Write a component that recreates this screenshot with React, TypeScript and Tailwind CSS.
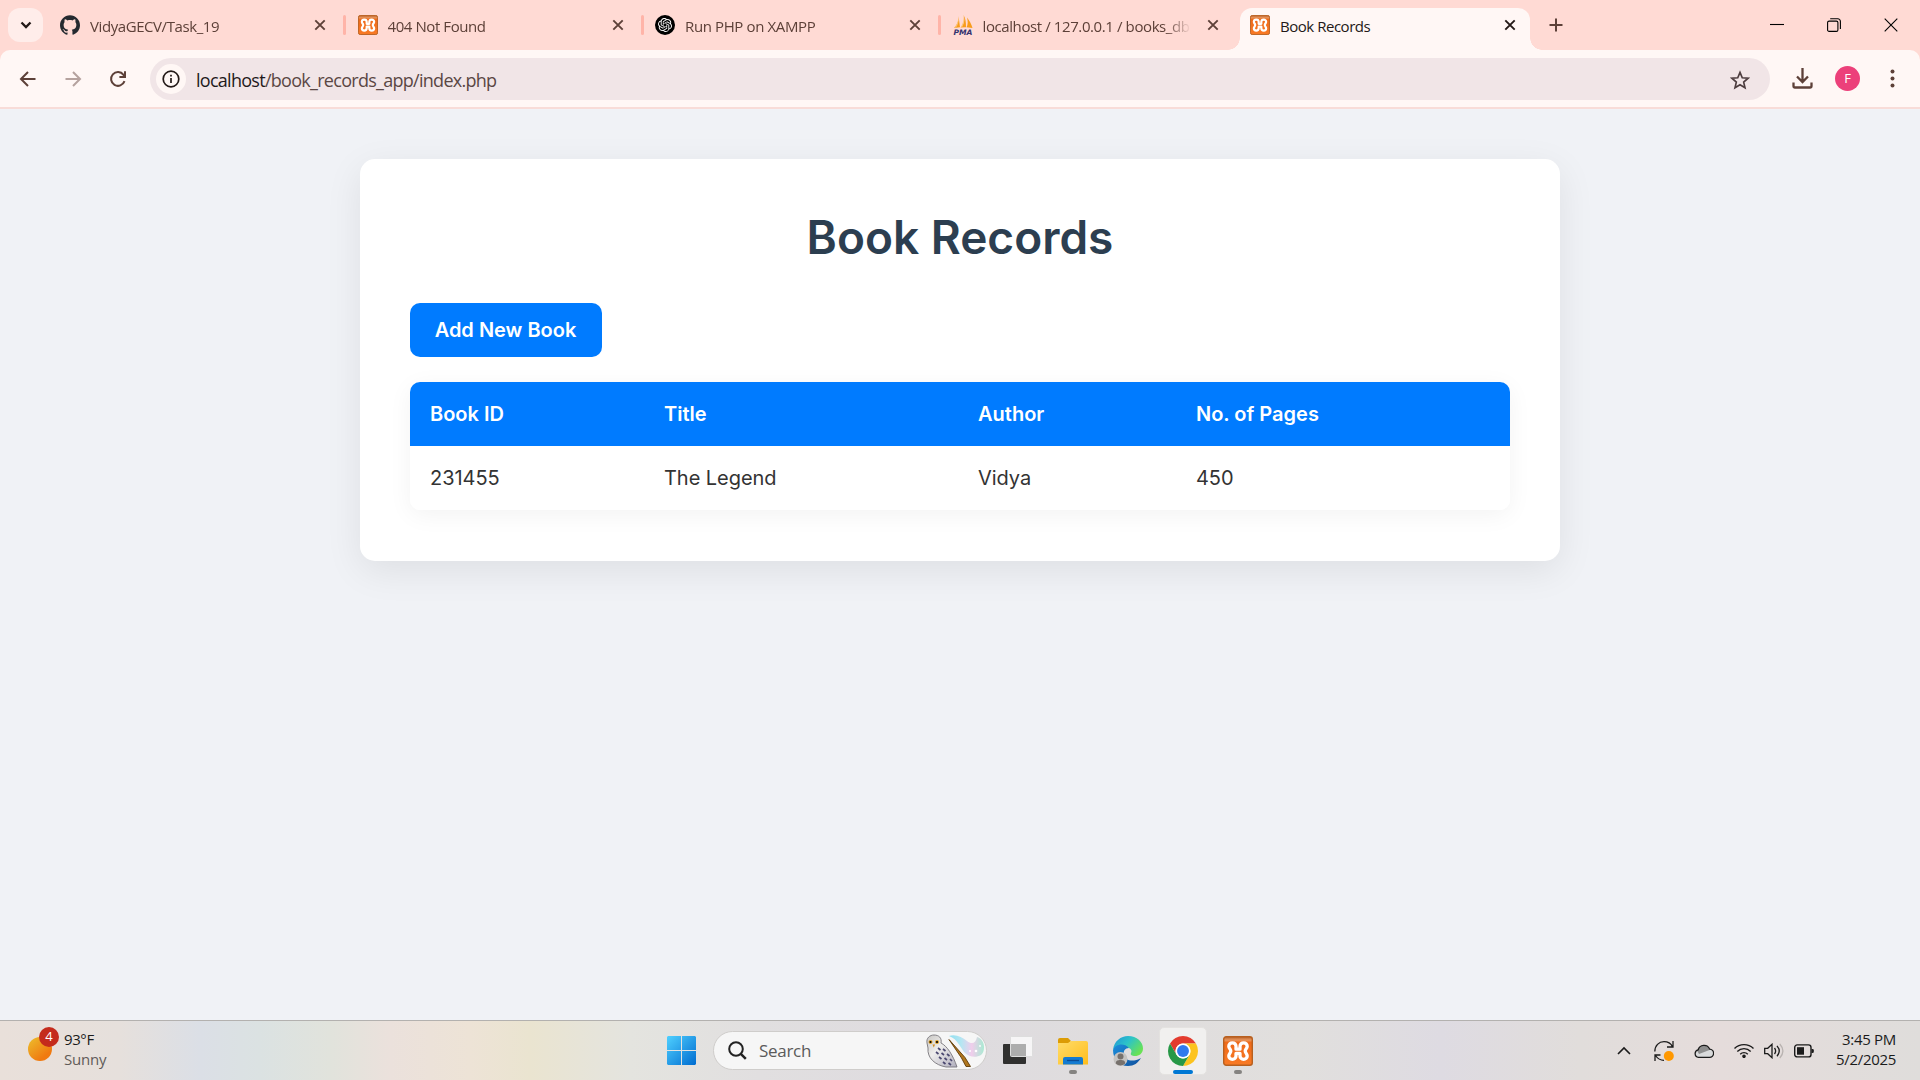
import React from "react";
import { SiOpenai, SiGithub } from "react-icons/si";

const UI = "font-['Open_Sans','Noto_Sans',sans-serif]";

function Xampp({ size }: { size: number }) {
  return (
    <svg width={size} height={size} viewBox="0 0 30 30" className="shrink-0">
      <defs>
        <linearGradient id="xo" x1="0" y1="0" x2="0" y2="1">
          <stop offset="0" stopColor="#b9602a" />
          <stop offset=".12" stopColor="#e8965c" />
          <stop offset=".2" stopColor="#ee6a1a" />
          <stop offset="1" stopColor="#f97a25" />
        </linearGradient>
      </defs>
      <rect x=".7" y=".7" width="28.6" height="28.6" rx="2.5" fill="url(#xo)" stroke="#b8601f" strokeWidth="1.4" />
      <path
        d="M13 13.200V10.200a3.600 3.400 0 0 0-7.200 0c0 2.200 2 2.800 2 4.800s-2 2.800-2 5a3.600 3.400 0 0 0 7.200 0v-2.600h4v2.600a3.600 3.400 0 0 0 7.200 0c0-2.200-2-3-2-5s2-2.600 2-4.800a3.600 3.400 0 0 0-7.200 0v3z"
        fill="none"
        stroke="#fff"
        strokeWidth="3.300"
        strokeLinejoin="round"
      />
    </svg>
  );
}

function Pma() {
  return (
    <svg width="20" height="20" viewBox="0 0 20 20" className="shrink-0">
      <path d="M5.500 1C6 5 5 9 1 13l6-.8zM10.500 0c1.500 5 1 9-3 12.500l5.500-.2C13 7 12.500 3 10.500 0zM14 2.500c1 4 1 7-.5 9.800l6 .7C18.500 9 16.500 6 14 2.500z" fill="#f89c1c" />
      <path d="M5.500 1C5.500 5 4 10 1 13l2-.4C5.500 9 6 6 5.500 1zM10.500 0c.5 5-.5 9-3 12.500l1.500-.1C11.500 8 11.500 4 10.500 0z" fill="#fbc476" />
      <text x="10" y="19.500" textAnchor="middle" fontSize="7.500" fontWeight="bold" fontStyle="italic" fontFamily="DejaVu Sans" fill="#34336f" textLength="19" lengthAdjust="spacingAndGlyphs">PMA</text>
    </svg>
  );
}

function Close({ color }: { color: string }) {
  return (
    <svg width="12" height="12" viewBox="0 0 12 12" className="shrink-0">
      <path d="M1.300 1.300l9.400 9.400M10.700 1.300l-9.400 9.400" stroke={color} strokeWidth="1.900" />
    </svg>
  );
}

function Tab({ icon, title, track, active = false, separator = true }: { icon: React.ReactNode; title: string; track: string; active?: boolean; separator?: boolean }) {
  return (
    <div className={active ? "relative flex h-[42px] w-[290px] items-center rounded-t-[12px] bg-[#fff7f5] pb-2 pl-2.5" : "relative flex h-[42px] w-[297.5px] items-center pb-2 pl-2.5"}>
      {icon}
      <div className={`ml-2.5 w-[208px] overflow-hidden whitespace-nowrap pt-px text-[15px] leading-5 ${track} ${active ? "text-[#231917]" : "text-[#5d4038] [mask-image:linear-gradient(90deg,#000_88%,transparent)]"}`}>
        {title}
      </div>
      <div className="ml-4 flex"><Close color={active ? "#231917" : "#5d4038"} /></div>
      {!active && separator && <div className="absolute left-[293px] top-[7px] h-5 w-[3px] rounded-full bg-[#ffb4a8]" />}
      {active && (
        <>
          <div className="absolute -left-3 bottom-0 size-3 bg-[radial-gradient(circle_at_0_0,transparent_11.5px,#fff7f5_12px)]" />
          <div className="absolute -right-3 bottom-0 size-3 bg-[radial-gradient(circle_at_100%_0,transparent_11.5px,#fff7f5_12px)]" />
        </>
      )}
    </div>
  );
}

function TabStrip() {
  return (
    <div className="flex h-[50px] items-end bg-[#ffdad4]">
      <div className="mb-2 ml-2 mr-[7px] flex h-[34px] w-[35px] items-center justify-center rounded-[12px] bg-[#ffedea]">
        <svg width="12" height="8" viewBox="0 0 12 8"><path d="M1.500 1.500L6 6l4.500-4.500" fill="none" stroke="#231917" strokeWidth="2.300" /></svg>
      </div>
      <Tab icon={<SiGithub size={20} color="#24292f" />} title="VidyaGECV/Task_19" track="tracking-[-0.42px]" />
      <Tab icon={<Xampp size={20} />} title="404 Not Found" track="tracking-[-0.42px]" />
      <Tab
        icon={<span className="flex size-5 shrink-0 items-center justify-center rounded-full bg-black"><SiOpenai size={14} color="#fff" /></span>}
        title="Run PHP on XAMPP"
        track="tracking-[-0.38px]"
      />
      <Tab separator={false} icon={<Pma />} title="localhost / 127.0.0.1 / books_db" track="tracking-[-0.4px]" />
      <Tab active icon={<Xampp size={20} />} title="Book Records" track="tracking-[-0.47px]" />
      <div className="mb-[18px] ml-[19px] flex">
        <svg width="14" height="14" viewBox="0 0 14 14"><path d="M7 .5v13M.5 7h13" stroke="#5d4038" strokeWidth="2" /></svg>
      </div>
      <div className="mb-[18px] ml-auto mr-[22px] flex items-center gap-[43px]">
        <svg width="14" height="14" viewBox="0 0 14 14"><path d="M0 6.500h14" stroke="#000" strokeWidth="1.100" /></svg>
        <svg width="14" height="14" viewBox="0 0 14 14" fill="none" stroke="#000" strokeWidth="1.100"><rect x=".6" y="3.100" width="10.300" height="10.300" rx="1.500" /><path d="M3.200.8h7.600a2.600 2.600 0 0 1 2.600 2.600v7.600" /></svg>
        <svg width="14" height="14" viewBox="0 0 14 14"><path d="M.7.7l12.600 12.600M13.300.7L.7 13.300" stroke="#000" strokeWidth="1.100" /></svg>
      </div>
    </div>
  );
}

function Toolbar() {
  return (
    <div className="bg-[#ffdad4]">
      <div className="flex h-[57px] items-center rounded-t-[10px] bg-[#fff7f5]">
        <div className="ml-[18px] flex w-[132px] items-center gap-[25px]">
          <svg width="20" height="20" viewBox="0 0 20 20" fill="none" stroke="#5d4038" strokeWidth="2"><path d="M17.500 10H3.500M10 3l-7 7 7 7" /></svg>
          <svg width="20" height="20" viewBox="0 0 20 20" fill="none" stroke="#b5a29e" strokeWidth="2"><path d="M2.500 10h14M10 3l7 7-7 7" /></svg>
          <svg width="20" height="20" viewBox="0 0 20 20" fill="none" stroke="#5d4038" strokeWidth="2"><path d="M16.500 12.200A6.900 6.900 0 1 1 15.500 5.800L17 7.500" /><path d="M17 2.300v5.600h-5.600" /></svg>
        </div>
        <div className="flex h-[42px] w-[1620px] items-center rounded-full bg-[#f1e5e7] pl-[6px]">
          <div className="flex size-[30px] items-center justify-center rounded-full bg-[#fff7f5]">
            <svg width="18" height="18" viewBox="0 0 18 18" fill="none" stroke="#231917" strokeWidth="1.700"><circle cx="9" cy="9" r="7.800" /><path d="M9 8v5M9 4.800v1.800" /></svg>
          </div>
          <div className="ml-[10px] pt-[2px] text-[18px] leading-6 tracking-[-0.72px] text-[#5a4744]"><span className="text-[#1f1a1b]">localhost</span>/book_records_app/index.php</div>
          <svg className="ml-auto mr-5 mt-0.5" width="20" height="20" viewBox="0 0 24 24"><path d="M12 2.800l2.700 6.500 7 .6-5.300 4.600 1.600 6.900-6-3.700-6 3.700 1.600-6.900L2.300 9.900l7-.6z" fill="none" stroke="#4d3d3f" strokeWidth="2" /></svg>
        </div>
        <svg className="ml-[22px]" width="21" height="21" viewBox="0 0 21 21" fill="none" stroke="#5d4038" strokeWidth="2.300"><path d="M10.500 0v13.500M5 8.500l5.500 5.500L16 8.500M1.500 14.500V18a1.500 1.500 0 0 0 1.500 1.500h15a1.500 1.500 0 0 0 1.500-1.500v-3.500" /></svg>
        <div className="ml-[22px] flex size-[25px] items-center justify-center rounded-full bg-[#ec407a] text-[13px] text-white">F</div>
        <svg className="ml-[30px]" width="5" height="20" viewBox="0 0 5 20" fill="#5d4038"><circle cx="2.500" cy="2.500" r="2" /><circle cx="2.500" cy="9.500" r="2" /><circle cx="2.500" cy="16.500" r="2" /></svg>
      </div>
      <div className="h-[2px] bg-[#f8dcd8]" />
    </div>
  );
}

function Records() {
  return (
    <main className="flex-1 bg-[#f0f2f6] pt-[50px] font-['Inter',sans-serif]">
      <div className="mx-auto h-[402px] w-[1200px] rounded-[15px] bg-white px-[50px] pt-[50px] shadow-[0_10px_37px_rgba(0,0,0,0.08)]">
        <h1 className="-mt-px text-center text-[46px] font-semibold leading-[58px] text-[#2c3e50]">Book Records</h1>
        <button className="mt-[37px] block h-[54px] w-[192px] rounded-[10px] bg-[#007bff] pr-px text-[20px] font-semibold text-white">Add New Book</button>
        <table className="mt-[25px] w-full table-fixed overflow-hidden rounded-[10px] text-left text-[20px] leading-6 shadow-[0_5px_25px_rgba(0,0,0,0.05)]">
          <colgroup><col className="w-[234px]" /><col className="w-[314px]" /><col className="w-[218px]" /><col /></colgroup>
          <thead className="bg-[#007bff] text-white">
            <tr className="h-16">
              {["Book ID", "Title", "Author", "No. of Pages"].map((h) => <th key={h} className="px-5 font-semibold">{h}</th>)}
            </tr>
          </thead>
          <tbody className="bg-white tracking-[-0.05px] text-[#333]">
            <tr className="h-16">
              {["231455", "The Legend", "Vidya", "450"].map((c) => <td key={c} className="px-5">{c}</td>)}
            </tr>
          </tbody>
        </table>
      </div>
    </main>
  );
}

function SearchArt() {
  return (
    <svg width="60" height="34" viewBox="0 0 60 34" className="ml-auto mr-px">
      <defs>
        <linearGradient id="wisp"><stop offset="0" stopColor="#8fdff0" /><stop offset=".35" stopColor="#b5e6f2" /><stop offset=".65" stopColor="#f0cdeb" /><stop offset="1" stopColor="#a9ead2" /></linearGradient>
        <linearGradient id="owl" x1="0" y1="0" x2="1" y2="1"><stop offset="0" stopColor="#c9c7c4" /><stop offset=".4" stopColor="#eeedec" /><stop offset="1" stopColor="#b0aebd" /></linearGradient>
      </defs>
      <path d="M24 2c7-2 13 1 18 5s9 2 10-4c4 1 7 5 7 10 0 4-1 6-3 8-5 3-12 2-16-2S33 5 24 2z" fill="url(#wisp)" />
      <circle cx="45" cy="17" r="1" fill="#fff" /><circle cx="51" cy="17" r="1.300" fill="#fff" /><circle cx="55" cy="12" r=".9" fill="#fff" />
      <path d="M2 9C1 4 5 1 9 1c5 0 8 3 7 8 6 3 12 12 16 24H21C10 31 2 24 3 14z" fill="url(#owl)" stroke="#77757a" strokeWidth=".9" />
      <path d="M13 14l2.500 2M18 15l2.500 2M11 18l2.500 2M16.500 19l2.500 2M22 20l2.500 2M14 23l2.500 2M19.500 24l2.500 2M25 25l2 2M18 28l2.500 2M23.500 29l2.500 2" stroke="#4b4870" strokeWidth="1.700" />
      <circle cx="5.500" cy="8" r="2" fill="#e0a12a" /><circle cx="12" cy="8" r="2" fill="#e0a12a" /><circle cx="5.500" cy="8" r="1.100" /><circle cx="12" cy="8" r="1.100" />
      <path d="M7.500 10.500h2.500l-1.200 3z" fill="#d28b1c" />
      <path d="M24 5.500l16 18 5.500 9h-4.500L36.500 24z" fill="#b0761e" stroke="#5f3b07" strokeWidth=".9" />
    </svg>
  );
}

function TaskIcons() {
  return (
    <div className="flex items-center">
      <svg className="ml-4" width="30" height="30" viewBox="0 0 30 30"><rect y="8" width="23" height="20" rx="1" fill="#30302f" /><rect x="7.500" y=".5" width="22" height="20" rx="1" fill="#fff" fillOpacity=".72" stroke="#ddd" /><rect x="8" y="8" width="15" height="12" fill="#999" fillOpacity=".55" /></svg>
      <svg className="ml-[25px]" width="30" height="30" viewBox="0 0 30 30">
        <defs><linearGradient id="fo" x1="0" y1="0" x2="1" y2="1"><stop offset="0" stopColor="#ffdc69" /><stop offset="1" stopColor="#ffbd1b" /></linearGradient></defs>
        <path d="M0 4a2 2 0 0 1 2-2h8l3 3-3 3H0z" fill="#dc9c05" /><path d="M0 7h10l3-2h15a2 2 0 0 1 2 2v21.500H0z" fill="url(#fo)" /><path d="M5 28.500V23a2 2 0 0 1 2-2h16a2 2 0 0 1 2 2v5.500z" fill="#147bd1" /><path d="M9 24.500h12" stroke="#0b4c95" strokeWidth="1.300" />
      </svg>
      <svg className="ml-[25px]" width="30" height="30" viewBox="0 0 30 30">
        <defs>
          <linearGradient id="eg" x1="0" y1="0" x2="1" y2=".6"><stop offset="0" stopColor="#1f93d8" /><stop offset=".5" stopColor="#2cc3c9" /><stop offset="1" stopColor="#69e255" /></linearGradient>
          <linearGradient id="eb" x1="0" y1="0" x2="1" y2="1"><stop offset="0" stopColor="#1c8fdd" /><stop offset="1" stopColor="#0f4f9d" /></linearGradient>
        </defs>
        <path d="M0 14C1 5 8 0 15 0c9 0 15 6 15 12.500 0 5-4 7.500-8 7.500-3 0-5-1-4-3 1-1.500.5-4-2-5C11 9 3 9 0 14z" fill="url(#eg)" />
        <path d="M0 14C2 8 11 6 16 12c-4 0-6 3-5 7 1 5 8 8 17 3-3 5-7 8-13 8C6 30 0 23 0 14z" fill="url(#eb)" />
        <circle cx="7.500" cy="23" r="7" fill="#c5c3c1" /><circle cx="7.500" cy="20.500" r="3" fill="#77716d" /><path d="M2.800 27.500c0-3 2-3.500 4.700-3.500s4.700.5 4.700 3.500c-2.500 2.500-7 2.500-9.400 0z" fill="#77716d" />
      </svg>
      <div className="ml-4 flex size-12 items-center justify-center rounded-[5px] border border-[#e4e2e0] bg-[#f1f0ef]">
        <svg width="30" height="30" viewBox="0 0 48 48">
          <path d="M3.220 12A24 24 0 0 1 44.780 12H24a12 12 0 0 0-10.390 18z" fill="#e33b2e" />
          <path d="M44.780 12A24 24 0 0 1 24 48L34.390 30A12 12 0 0 0 24 12z" fill="#fcc31e" />
          <path d="M3.220 12A24 24 0 0 0 24 48L34.390 30A12 12 0 0 1 13.610 30z" fill="#279847" />
          <circle cx="24" cy="24" r="12" fill="#fff" /><circle cx="24" cy="24" r="9.500" fill="#3079ee" />
        </svg>
      </div>
      <div className="ml-4 flex"><Xampp size={30} /></div>
    </div>
  );
}

function Tray() {
  return (
    <div className="ml-auto mr-6 flex items-center">
      <svg width="14" height="9" viewBox="0 0 14 9"><path d="M1 8l6-6 6 6" fill="none" stroke="#1b1b1b" strokeWidth="1.600" /></svg>
      <svg className="ml-[23px]" width="20" height="20" viewBox="0 0 20 20" fill="none" stroke="#1b1b1b" strokeWidth="1.300"><path d="M.8 10.500C.8 4.500 5 .7 10 .7c4 0 7 2 8.500 5M19 0v6h-6M1 20v-6h5.500M1.500 14.500c2 3 5 4.800 8.500 4.800" /><circle cx="14.800" cy="15" r="5" fill="#ff9800" stroke="none" /></svg>
      <svg className="ml-5" width="20" height="14" viewBox="0 0 20 14"><path d="M4.500 13.300a3.800 3.800 0 0 1-.3-7.500 6 6 0 0 1 11.400-.7 4.100 4.100 0 0 1-.2 8.200z" fill="#d9dadb" /><path d="M3 6.500a6.500 6.500 0 0 1 11-3L15.500 6 5 10z" fill="#8e8e8e" /><path d="M4.500 13.300a3.800 3.800 0 0 1-.3-7.500 6 6 0 0 1 11.400-.7 4.100 4.100 0 0 1-.2 8.200z" fill="none" stroke="#1b1b1b" strokeWidth="1.300" /></svg>
      <svg className="ml-5" width="20" height="15" viewBox="0 0 20 15" fill="none" stroke="#1b1b1b" strokeWidth="1.400"><path d="M.5 5.500a13.500 13.500 0 0 1 19 0M3.300 8.400a9.500 9.500 0 0 1 13.400 0M6.200 11.200a5.400 5.400 0 0 1 7.600 0" /><circle cx="10" cy="13.300" r="1.100" fill="#1b1b1b" /></svg>
      <svg className="ml-[10px]" width="20" height="16" viewBox="0 0 20 16" fill="none" stroke="#1b1b1b" strokeWidth="1.300"><path d="M.7 5.300h3L8 1.300v13.400l-4.300-4H.7z" /><path d="M10.500 5c1.500 2 1.500 4 0 6M13 2.800c3 3.500 3 7 0 10.400" /><path d="M15.800 1c4 4.500 4 9.500 0 14" stroke="#b9b3b1" /></svg>
      <svg className="ml-[10px]" width="20" height="14" viewBox="0 0 20 14"><rect x=".7" y=".9" width="16.300" height="12" rx="2.500" fill="none" stroke="#1b1b1b" strokeWidth="1.400" /><rect x="3" y="3.200" width="7" height="7.500" fill="#1b1b1b" /><path d="M17.500 5h1a1.300 1.300 0 0 1 1.300 1.300v1.400A1.300 1.300 0 0 1 18.500 9h-1z" fill="#1b1b1b" /></svg>
      <div className="mb-[3px] w-[82px] text-right text-[15px] leading-5 tracking-[-0.3px] text-[#1b1b1b]"><div>3:45 PM</div><div>5/2/2025</div></div>
    </div>
  );
}

function Taskbar() {
  return (
    <footer className="relative flex h-[60px] items-center border-t border-[#b3b1af] bg-[linear-gradient(90deg,#e9e0da_0px,#e6e0dc_120px,#dbdfe6_200px,#dbe2e2_260px,#e1e3dc_330px,#ebe1dc_390px,#ede3d6_470px,#eae4d0_530px,#e4e4df_630px,#e1dfe0_760px,#dedbdf_920px,#e1dfdd_1300px,#dedbe2_1440px,#e1dddb_1580px,#e5dcdb_1720px,#dfdddb_1920px)]">
      <div className="relative ml-7 h-12 w-6">
        <div className="absolute left-0 top-[10px] size-6 rounded-full bg-[linear-gradient(140deg,#ecc02d,#f07a10_75%)]" />
        <div className="absolute left-[11px] top-0 flex size-5 items-center justify-center rounded-full bg-[#c42b1c] text-[13px] text-white">4</div>
      </div>
      <div className="mb-[3px] ml-3 w-[603px] text-[15px] leading-5 tracking-[-0.4px] text-[#1b1b1b]"><div>93°F</div><div className="tracking-[-0.2px] text-[#5f5b58]">Sunny</div></div>
      <svg width="29" height="29" viewBox="0 0 29 29"><defs><linearGradient id="wi" gradientUnits="userSpaceOnUse" x1="0" y1="0" x2="29" y2="29"><stop offset="0" stopColor="#4fd0ff" /><stop offset="1" stopColor="#006cd0" /></linearGradient></defs><path d="M1 0h13v14H0V1zM15 0h13l1 1v13H15zM0 15h14v14H1l-1-1zM15 15h14v13l-1 1H15z" fill="url(#wi)" /></svg>
      <div className="ml-[17px] flex h-[39px] w-[274px] items-center rounded-full border border-[#cfcdcb] bg-[#f6f6f6] pl-3.5">
        <svg width="19" height="19" viewBox="0 0 19 19" fill="none" stroke="#222" strokeWidth="2"><circle cx="8" cy="8" r="6.800" /><path d="M12.800 12.800l5 5" strokeWidth="2.500" /></svg>
        <span className="ml-3 text-[17px] tracking-[-0.3px] text-[#5b5b5b]">Search</span>
        <SearchArt />
      </div>
      <TaskIcons />
      <Tray />
      <div className="absolute left-[1069px] top-[49px] h-1 w-2 rounded-full bg-[#858381]" />
      <div className="absolute left-[1173px] top-[49px] h-1 w-5 rounded-full bg-[#0078d4]" />
      <div className="absolute left-[1234px] top-[49px] h-1 w-2 rounded-full bg-[#858381]" />
    </footer>
  );
}

export default function App() {
  return (
    <div className={`flex h-[1080px] w-[1920px] flex-col overflow-hidden ${UI}`}>
      <TabStrip />
      <Toolbar />
      <Records />
      <Taskbar />
    </div>
  );
}
